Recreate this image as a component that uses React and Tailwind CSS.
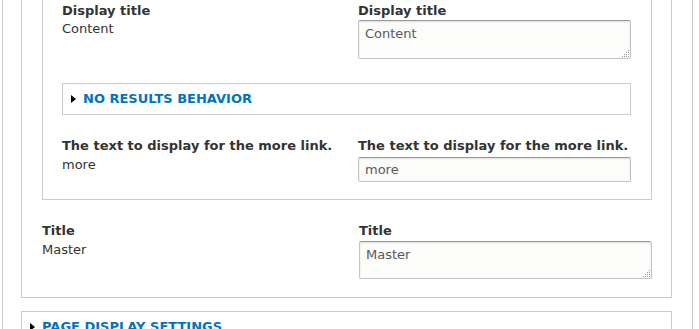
import React from 'react';

const Arrow = () => (
  <svg width="5" height="8" viewBox="0 0 5 8" className="shrink-0">
    <polygon points="0,0 5,4 0,8" fill="#000" />
  </svg>
);

// dotted grip like the old chrome textarea handle
const Grip = () => (
  <svg width="7" height="7" viewBox="0 0 7 7" className="pointer-events-none absolute bottom-[2px] right-[2px]">
    {[[6, 0], [4, 2], [6, 2], [2, 4], [4, 4], [6, 4], [0, 6], [2, 6], [4, 6], [6, 6]].map(([x, y], i) => (
      <rect key={i} x={x} y={y} width="1" height="1" fill="#9a9a9a" />
    ))}
  </svg>
);

const fieldCls =
  'block w-full rounded-[2px] border border-[#c4c4c4] border-t-[#999] bg-[#fcfcfa] px-[6px] text-[13px] leading-[18px] text-[#595959] shadow-[inset_0_1px_2px_rgba(0,0,0,0.125)] outline-none font-["DejaVu_Sans",sans-serif]';

const Area = ({ value, className }) => (
  <div className={`relative ${className}`}>
    <textarea readOnly defaultValue={value} className={`${fieldCls} h-full resize-none pt-[4px]`} />
    <Grip />
  </div>
);

const App = () => {
  return (
    <div className='h-[329px] overflow-hidden bg-white font-["DejaVu_Sans",sans-serif] text-[13px] leading-[18px] text-[#333]'>
      {/* outer wrapper */}
      <div className="ml-[2px] h-[329px] w-[691px] border-x border-[#ccc] pl-[18px]">
        {/* display settings box */}
        <div className="w-[651px] border-x border-b border-[#ccc] pl-[20px] pr-[19px] pb-[18px]">
          {/* inner fieldset */}
          <div className="border-x border-b border-[#ccc] pl-[19px] pr-[20px] pt-[2px] pb-[17px]">
            <div className="grid grid-cols-[296px_1fr]">
              <div>
                <div className="font-bold">Display title</div>
                <div>Content</div>
              </div>
              <div>
                <div className="font-bold">Display title</div>
                <Area value="Content" className="h-[39px]" />
              </div>
            </div>

            <div className="mt-[24px] flex h-[32px] items-center gap-[7px] border border-[#ccc] pl-[8px]">
              <Arrow />
              <span className="font-bold uppercase text-[#0074bd]">No results behavior</span>
            </div>

            <div className="mt-[22px] grid grid-cols-[296px_1fr]">
              <div>
                <div className="font-bold">The text to display for the more link.</div>
                <div className="mt-px">more</div>
              </div>
              <div>
                <div className="font-bold">The text to display for the more link.</div>
                <input
                  readOnly
                  defaultValue="more"
                  className={`${fieldCls} mt-[2px] h-[25px]`}
                />
              </div>
            </div>
          </div>

          <div className="mt-[22px] grid grid-cols-[317px_1fr]">
            <div>
              <div className="font-bold">Title</div>
              <div className="mt-px">Master</div>
            </div>
            <div>
              <div className="font-bold">Title</div>
              <Area value="Master" className="mt-px h-[38px]" />
            </div>
          </div>
        </div>

        {/* page display settings */}
        <div className="mt-[13px] flex h-[32px] w-[651px] items-center gap-[7px] border border-[#ccc] pl-[8px]">
          <Arrow />
          <span className="font-bold uppercase text-[#0074bd]">Page display settings</span>
        </div>
      </div>
    </div>
  );
};

export default App;
